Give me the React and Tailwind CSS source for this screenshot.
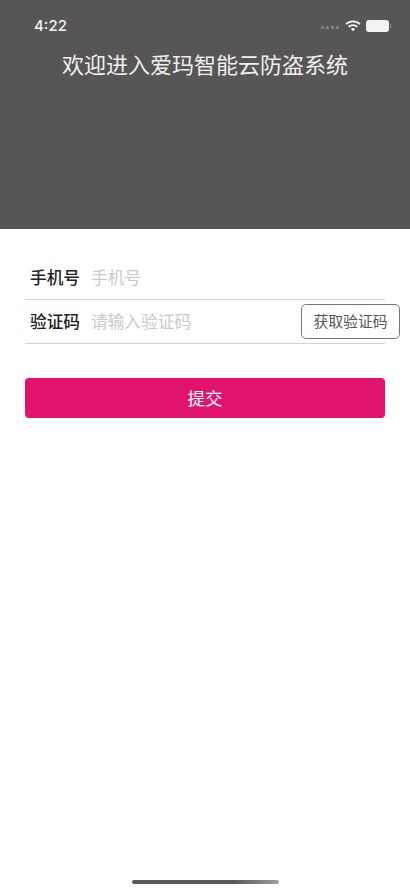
const CJK = "font-['Noto_Sans_CJK_SC','Noto_Sans',sans-serif]";

function StatusBar() {
  return (
    <div className="flex items-center justify-between h-[20px] pl-[34px] pr-[19px]">
      <span className="font-['Inter',sans-serif] text-[15px] font-medium text-[#f2f2f2]">4:22</span>
      <div className="flex items-center">
        <div className="flex gap-[2px] mr-[6px] mt-[3px]">
          <span className="w-[3px] h-[3px] rounded-full bg-[#8b8a8a]" />
          <span className="w-[3px] h-[3px] rounded-full bg-[#8b8a8a]" />
          <span className="w-[3px] h-[3px] rounded-full bg-[#8b8a8a]" />
          <span className="w-[3px] h-[3px] rounded-full bg-[#8b8a8a]" />
        </div>
        <svg width="16" height="12" viewBox="0 0 16 12" className="mr-[5px] mb-[1px]">
          <path d="M1 4.2a10 10 0 0 1 14 0" fill="none" stroke="#f5f5f5" strokeWidth="1.8" />
          <path d="M3.6 6.9a6.2 6.2 0 0 1 8.8 0" fill="none" stroke="#f5f5f5" strokeWidth="1.8" />
          <path d="M8 11.2 5.9 9a3 3 0 0 1 4.2 0z" fill="#f5f5f5" />
        </svg>
        <div className="w-[23px] h-[12px] rounded-[3px] bg-[#f2f2f2]" />
        <div className="w-[1px] h-[4px] ml-[1px] bg-[#8b8a8a]" />
      </div>
    </div>
  );
}

function FormRow({ label, placeholder, action }) {
  return (
    <div className="flex items-center h-[44px] border-b-[1.5px] border-[#d4d4d4]">
      <span className="w-[66px] pl-[5px] text-[16.7px] text-[#222] font-medium shrink-0">{label}</span>
      <span className="text-[16.7px] text-[#cacaca]">{placeholder}</span>
      {action}
    </div>
  );
}

export default function App() {
  return (
    <div className={`relative w-[410px] h-[892px] bg-white overflow-hidden ${CJK}`}>
      <header className="h-[229px] bg-[#575556] pt-[16px]">
        <StatusBar />
        <h1 className="mt-[10px] text-center text-[22px] leading-[34px] font-normal text-[#f0f0f0]">
          欢迎进入爱玛智能云防盗系统
        </h1>
      </header>

      <main className="px-[25px] pt-[27px]">
        <FormRow label="手机号" placeholder="手机号" />
        <FormRow
          label="验证码"
          placeholder="请输入验证码"
          action={
            <button className="ml-auto -mr-[15px] w-[99px] h-[35px] bg-white border border-[#777] rounded-[5px] text-[14.8px] text-[#555]">
              获取验证码
            </button>
          }
        />
        <button className="mt-[34px] w-full h-[40px] rounded-[4px] bg-[#e2136e] text-[17.5px] text-white">
          提交
        </button>
      </main>

      <div className="absolute left-[132px] bottom-[8px] w-[147px] h-[4px] rounded-full bg-gradient-to-r from-[#5a5a5a] from-70% to-[#a0a0a0]" />
    </div>
  );
}
